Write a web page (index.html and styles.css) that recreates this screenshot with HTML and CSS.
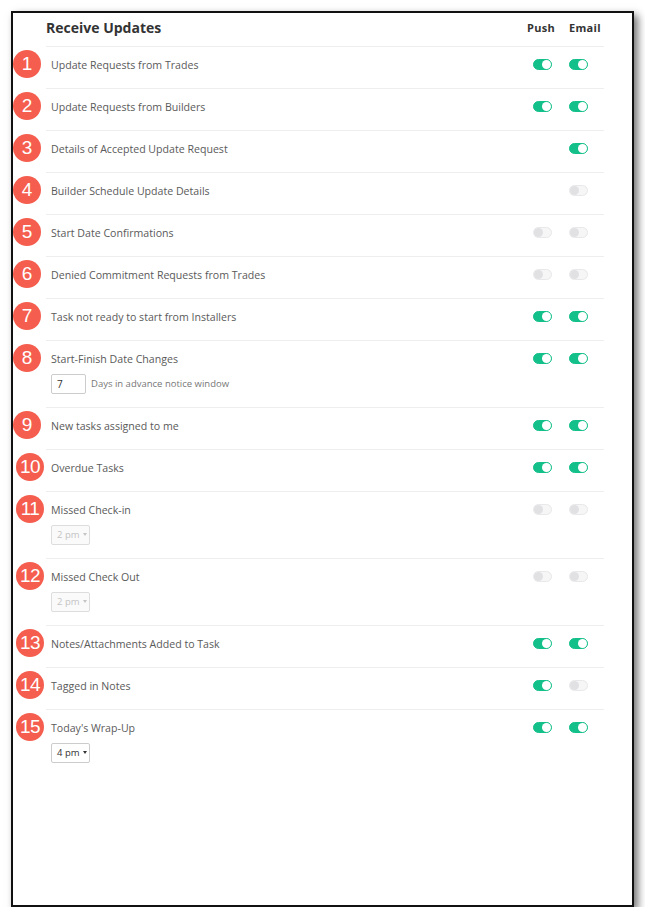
FILE: index.html
```html
<!DOCTYPE html>
<html lang="en">

<head>
 <meta charset="UTF-8">
 <meta name="viewport" content="width=device-width">
 <title>Receive Updates</title>
 <link rel="stylesheet" href="styles.css">
</head>

<body>

 <div class="panel">

  <div class="head">
   <h1>Receive Updates</h1>
   <span class="col-push">Push</span>
   <span class="col-email">Email</span>
  </div>

  <div class="row">
   <span class="badge">1</span>
   <div class="label">Update Requests from Trades</div>
   <span class="toggle on"></span>
   <span class="toggle on"></span>
  </div>

  <div class="row">
   <span class="badge">2</span>
   <div class="label">Update Requests from Builders</div>
   <span class="toggle on"></span>
   <span class="toggle on"></span>
  </div>

  <div class="row">
   <span class="badge">3</span>
   <div class="label">Details of Accepted Update Request</div>
   <span></span>
   <span class="toggle on"></span>
  </div>

  <div class="row">
   <span class="badge">4</span>
   <div class="label">Builder Schedule Update Details</div>
   <span></span>
   <span class="toggle"></span>
  </div>

  <div class="row">
   <span class="badge">5</span>
   <div class="label">Start Date Confirmations</div>
   <span class="toggle"></span>
   <span class="toggle"></span>
  </div>

  <div class="row">
   <span class="badge">6</span>
   <div class="label">Denied Commitment Requests from Trades</div>
   <span class="toggle"></span>
   <span class="toggle"></span>
  </div>

  <div class="row">
   <span class="badge">7</span>
   <div class="label">Task not ready to start from Installers</div>
   <span class="toggle on"></span>
   <span class="toggle on"></span>
  </div>

  <div class="row">
   <span class="badge">8</span>
   <div class="label">
    Start-Finish Date Changes
    <div class="extra">
     <input class="days" value="7">
     <span class="hint">Days in advance notice window</span>
    </div>
   </div>
   <span class="toggle on"></span>
   <span class="toggle on"></span>
  </div>

  <div class="row">
   <span class="badge">9</span>
   <div class="label">New tasks assigned to me</div>
   <span class="toggle on"></span>
   <span class="toggle on"></span>
  </div>

  <div class="row">
   <span class="badge two">10</span>
   <div class="label">Overdue Tasks</div>
   <span class="toggle on"></span>
   <span class="toggle on"></span>
  </div>

  <div class="row">
   <span class="badge two">11</span>
   <div class="label">
    Missed Check-in
    <div class="extra">
     <button class="time" type="button" disabled>2 pm<i class="caret"></i></button>
    </div>
   </div>
   <span class="toggle"></span>
   <span class="toggle"></span>
  </div>

  <div class="row">
   <span class="badge two">12</span>
   <div class="label">
    Missed Check Out
    <div class="extra">
     <button class="time" type="button" disabled>2 pm<i class="caret"></i></button>
    </div>
   </div>
   <span class="toggle"></span>
   <span class="toggle"></span>
  </div>

  <div class="row">
   <span class="badge two">13</span>
   <div class="label">Notes/Attachments Added to Task</div>
   <span class="toggle on"></span>
   <span class="toggle on"></span>
  </div>

  <div class="row">
   <span class="badge two">14</span>
   <div class="label">Tagged in Notes</div>
   <span class="toggle on"></span>
   <span class="toggle"></span>
  </div>

  <div class="row">
   <span class="badge two">15</span>
   <div class="label">
    Today's Wrap-Up
    <div class="extra">
     <button class="time" type="button">4 pm<i class="caret"></i></button>
    </div>
   </div>
   <span class="toggle on"></span>
   <span class="toggle on"></span>
  </div>

 </div>

</body>
</html>
```

FILE: styles.css
```css
body {
  margin: 0;
  background-color: white;
  font-family: 'Open Sans', 'Noto Sans', sans-serif;
  color: #5a5a5a;
}
.panel {
  box-sizing: border-box;
  width: 623px;
  height: 896px;
  margin: 11px 0 0 11px;
  padding: 0 28px 0 33px;
  border: 2px solid #111;
  background-color: white;
  box-shadow: 4px 4px 8px rgba(0, 0, 0, 0.55);
}
.head,
.row {
  display: grid;
  grid-template-columns: 1fr 36px 36px;
  padding-right: 8px;
  border-bottom: 1px solid #eee;
}
.head {
  padding-top: 5px;
  padding-bottom: 8px;
  line-height: 20px;
  color: #333;
}
h1 {
  margin: 0;
  font-size: 14px;
  font-weight: 700;
}
.col-push,
.col-email {
  font-size: 11px;
  font-weight: 700;
  letter-spacing: 0.3px;
}
.col-push {
  padding-left: 3px;
}
.col-email {
  padding-left: 9px;
}
.row {
  position: relative;
  padding-top: 8px;
  padding-bottom: 13px;
  padding-left: 5px;
  align-items: start;
}
.row:last-child {
  border-bottom: none;
}
.label {
  font-size: 10.6px;
  line-height: 20px;
}
.extra {
  display: flex;
  align-items: center;
  margin-top: 4px;
  height: 21px;
}

/* numbered markers over the list */
.badge {
  position: absolute;
  left: -33px;
  top: 3px;
  width: 28px;
  height: 28px;
  border-radius: 50%;
  background-color: #f55d4e;
  color: white;
  font-family: 'Liberation Sans', Arial, sans-serif;
  font-size: 19px;
  line-height: 28px;
  text-align: center;
}
.badge.two {
  left: -30px;
  letter-spacing: -0.5px;
}

/* switches */
.toggle {
  position: relative;
  justify-self: center;
  box-sizing: border-box;
  width: 19px;
  height: 11px;
  margin-top: 4px;
  border-radius: 6px;
  background-color: #f6f6f7;
  border: 1px solid #e8e8ea;
}
.toggle::after {
  content: '';
  position: absolute;
  left: 0;
  top: 0;
  width: 9px;
  height: 9px;
  border-radius: 50%;
  background-color: #e1e1e4;
}
.toggle.on {
  background-color: #14c08a;
  border-color: #14c08a;
}
.toggle.on::after {
  left: auto;
  right: 0;
  background-color: white;
}

/* small controls */
.days {
  box-sizing: border-box;
  width: 35px;
  height: 20px;
  padding: 0 5px;
  border: 1px solid #ccc;
  border-radius: 2px;
  font-family: inherit;
  font-size: 10px;
  color: #333;
}
.hint {
  margin-left: 5px;
  font-size: 9.5px;
  color: #777;
}
.time {
  display: inline-flex;
  align-items: center;
  box-sizing: border-box;
  width: 39px;
  height: 20px;
  padding: 0 0 0 5px;
  border: 1px solid #ccc;
  border-radius: 2px;
  background-color: white;
  font-family: inherit;
  font-size: 9.5px;
  white-space: nowrap;
  color: #333;
}
.time:disabled {
  border-color: #ddd;
  background-color: #fafafa;
  color: #c4c4c4;
}
.caret {
  margin-left: 3px;
  border-top: 3px solid currentColor;
  border-left: 2.5px solid transparent;
  border-right: 2.5px solid transparent;
}
```
